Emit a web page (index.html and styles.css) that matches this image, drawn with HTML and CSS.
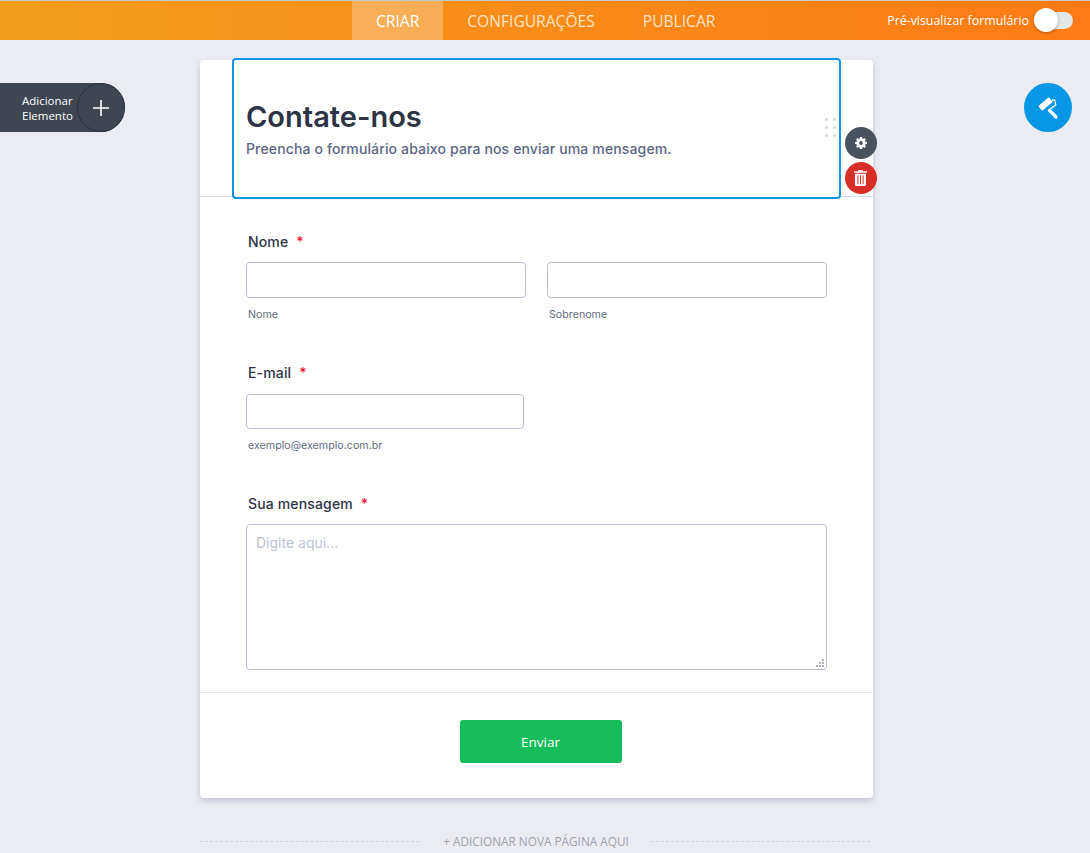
FILE: index.html
```html
<!DOCTYPE html>
<html lang="pt-BR">
<head>
    <meta charset="UTF-8">
    <title>Contate-nos</title>
    <link rel="stylesheet" href="styles.css">
</head>
<body>
    <header class="topbar">
        <nav class="tabs">
            <a class="tab active">CRIAR</a>
            <a class="tab">CONFIGURAÇÕES</a>
            <a class="tab">PUBLICAR</a>
        </nav>
        <div class="preview">
            <span>Pré-visualizar formulário</span>
            <span class="switch"><span class="knob"></span></span>
        </div>
    </header>

    <div class="add-element">
        <span class="add-text">Adicionar<br>Elemento</span>
        <span class="add-circle">
            <svg width="16" height="16" viewBox="0 0 16 16"><path d="M8 0v16M0 8h16" stroke="#fff" stroke-width="1.6"/></svg>
        </span>
    </div>

    <button class="paint-btn" type="button">
        <svg width="24" height="24" viewBox="0 0 24 24">
            <rect x="2.500" y="5" width="14" height="6" rx="1" transform="rotate(-40 9.500 8)" fill="#fff"/>
            <path d="M16 4.500l2.600-.6 1.200 4.800-6.600 5.300" fill="none" stroke="#fff" stroke-width="1.300"/>
            <path d="M13.500 14.500l6.500 6.500" fill="none" stroke="#fff" stroke-width="3.200" stroke-linecap="round"/>
        </svg>
    </button>

    <main class="card">
        <section class="card-head">
            <div class="head-selected">
                <h1>Contate-nos</h1>
                <p>Preencha o formulário abaixo para nos enviar uma mensagem.</p>
                <span class="drag-dots"><i></i><i></i><i></i><i></i><i></i><i></i></span>
            </div>
            <div class="head-tools">
                <button class="tool gear" type="button">
                    <svg width="12" height="12" viewBox="0 0 14 14">
                        <path fill="#fff" fill-rule="evenodd" d="M5.800 0h2.400l.3 1.800 1 .45L11.050 1.200l1.700 1.700-1.050 1.500.45 1L14 5.800v2.400l-1.850.4-.45 1 1.050 1.500-1.700 1.700-1.500-1.050-1 .45L8.200 14H5.800l-.3-1.800-1-.45-1.550 1.050-1.700-1.700 1.050-1.500-.45-1L0 8.200V5.800l1.850-.4.45-1L1.250 2.900l1.700-1.700 1.550 1.050 1-.45zM7 4.800a2.200 2.200 0 1 0 0 4.400 2.200 2.200 0 0 0 0-4.400z"/>
                    </svg>
                </button>
                <button class="tool trash" type="button">
                    <svg width="13" height="16" viewBox="0 0 13 16">
                        <path fill="#fff" fill-rule="evenodd" d="M4.500 0h4l.5 1.300h4v1.500H0V1.300h4zM1 3.800h11v10.700a1.500 1.500 0 0 1-1.500 1.500h-8A1.500 1.500 0 0 1 1 14.500zm2.400 1.500v9h1v-9zm2.600 0v9h1v-9zm2.600 0v9h1v-9z"/>
                    </svg>
                </button>
            </div>
        </section>

        <section class="fields">
            <div class="field field-name">
                <label>Nome <span class="req">*</span></label>
                <div class="name-row">
                    <div class="sub">
                        <input type="text">
                        <small>Nome</small>
                    </div>
                    <div class="sub">
                        <input type="text">
                        <small>Sobrenome</small>
                    </div>
                </div>
            </div>
            <div class="field field-email">
                <label>E-mail <span class="req">*</span></label>
                <input class="email" type="text">
                <small>exemplo@exemplo.com.br</small>
            </div>
            <div class="field field-msg">
                <label>Sua mensagem <span class="req">*</span></label>
                <div class="msg-box">
                    <textarea placeholder="Digite aqui..."></textarea>
                    <svg class="grip" width="8" height="8" viewBox="0 0 8 8">
                        <path fill="#b4b4b4" d="M6 0h2v2H6zM3 3h2v2H3zM6 3h2v2H6zM0 6h2v2H0zM3 6h2v2H3zM6 6h2v2H6z"/>
                    </svg>
                </div>
            </div>
        </section>

        <section class="card-foot">
            <button class="send" type="button">Enviar</button>
        </section>
    </main>

    <div class="add-page">
        <span class="dash"></span>
        <span class="add-page-text">+ ADICIONAR NOVA PÁGINA AQUI</span>
        <span class="dash"></span>
    </div>
</body>
</html>
```

FILE: styles.css
```css
* {
    box-sizing: border-box;
}

html, body {
    height: 853px;
    overflow: hidden;
}

body {
    margin: 0;
    background: #ebecf2;
    font-family: Inter, "Liberation Sans", sans-serif;
    color: #2c3345;
    position: relative;
}

.topbar {
    height: 40px;
    border-top: 1px solid #c8c8c8;
    background: linear-gradient(90deg, #f39c1c 0%, #ff7a14 100%);
    display: flex;
    justify-content: flex-end;
    align-items: center;
    font-family: "Open Sans", sans-serif;
    position: relative;
}

.tabs {
    position: absolute;
    left: 352px;
    top: 0;
    height: 39px;
    display: flex;
}

.tab {
    display: flex;
    align-items: center;
    padding: 0 24px;
    font-size: 15.600px;
    color: #ffe3c4;
}

.tab.active {
    background: rgba(255, 255, 255, 0.27);
    color: #fff;
}

.preview {
    display: flex;
    align-items: center;
    gap: 5px;
    padding-right: 17px;
    font-size: 12.400px;
    color: #fff;
}

.switch {
    display: block;
    width: 39px;
    height: 17px;
    border-radius: 9px;
    background: #e3e7e5;
    position: relative;
}

.knob {
    position: absolute;
    left: 0;
    top: -4px;
    width: 24px;
    height: 24px;
    border-radius: 50%;
    background: #fff;
    box-shadow: 0 1px 3px rgba(0, 0, 0, 0.3);
}

.add-element {
    position: absolute;
    left: 0;
    top: 83px;
    width: 125px;
    height: 49px;
    background: #3f4651;
    border-radius: 0 25px 25px 0;
    color: #fff;
}

.add-text {
    position: absolute;
    left: 22px;
    top: 10px;
    font-size: 11.500px;
    line-height: 15px;
    font-family: "Open Sans", sans-serif;
}

.add-circle {
    position: absolute;
    left: 77px;
    top: 0;
    width: 48px;
    height: 49px;
    border-radius: 50%;
    border: 1px solid #2c3340;
    display: flex;
    align-items: center;
    justify-content: center;
}

.paint-btn {
    position: absolute;
    left: 1024px;
    top: 83px;
    width: 48px;
    height: 49px;
    border: 0;
    border-radius: 50%;
    background: #0797e6;
    padding: 0;
    display: flex;
    align-items: center;
    justify-content: center;
}

.card {
    width: 673px;
    height: 738px;
    margin: 20px 0 0 200px;
    background: #fff;
    border-radius: 4px;
    box-shadow: 0 3px 6px rgba(86, 96, 128, 0.28);
    display: flex;
    flex-direction: column;
}

.card-head {
    height: 137px;
    border-bottom: 1px solid #d8dae5;
    position: relative;
}

.head-selected {
    position: absolute;
    left: 32px;
    top: -2px;
    width: 609px;
    height: 141px;
    border: 2px solid #1296e4;
    border-radius: 4px;
    background: #fff;
    padding: 39px 0 0 12px;
}

h1 {
    margin: 0;
    font-size: 29px;
    line-height: 35px;
    font-weight: 600;
    color: #2c3345;
}

.head-selected p {
    margin: 6px 0 0;
    font-size: 14px;
    line-height: 17px;
    font-weight: 500;
    letter-spacing: 0.14px;
    color: #5c6685;
}

.drag-dots {
    position: absolute;
    right: 3px;
    top: 58px;
    width: 11px;
    display: grid;
    grid-template-columns: 3px 3px;
    gap: 5px;
    justify-content: space-between;
}

.drag-dots i {
    display: block;
    width: 3px;
    height: 3px;
    background: #d3d7e3;
    border-radius: 50%;
}

.head-tools {
    position: absolute;
    left: 645px;
    top: 67px;
    display: flex;
    flex-direction: column;
    gap: 3px;
}

.tool {
    width: 32px;
    height: 32px;
    border: 0;
    border-radius: 50%;
    padding: 0;
    display: flex;
    align-items: center;
    justify-content: center;
}

.tool.gear {
    background: #4a525e;
}

.tool.trash {
    background: #d92d27;
}

.tool.trash svg {
    margin-right: 1px;
}

.fields {
    flex: 1;
    padding: 0 46px;
    border-bottom: 1px solid #e4e6f0;
}

.field {
    display: flex;
    flex-direction: column;
}

.field label {
    font-size: 14px;
    line-height: 17px;
    font-weight: 500;
    letter-spacing: 0.15px;
    margin: 0 0 12px 2px;
    color: #2c3345;
}

.req {
    color: #f2183a;
    margin-left: 4px;
}

.field small {
    display: block;
    font-size: 10.700px;
    line-height: 14px;
    margin: 10px 0 0 2px;
    color: #636b80;
}

input, textarea {
    display: block;
    background: #fff;
    border: 1px solid #b8bfd2;
    border-radius: 4px;
    font-family: inherit;
}

.field-name {
    padding-top: 36px;
}

.name-row {
    display: flex;
    gap: 21px;
}

.sub {
    flex: 1;
}

.sub input {
    width: 100%;
    height: 36px;
}

.field-email {
    padding-top: 42px;
}

.field-email label {
    margin-bottom: 13px;
}

.email {
    width: 278px;
    height: 35px;
}

.field-msg {
    padding-top: 42px;
}

.msg-box {
    position: relative;
}

textarea {
    width: 581px;
    height: 146px;
    padding: 9px;
    font-size: 14px;
    resize: none;
}

textarea::placeholder {
    color: #bcc3d6;
}

.grip {
    position: absolute;
    right: 3px;
    bottom: 3px;
}

.card-foot {
    height: 105px;
    padding: 27px 0 0 8px;
    display: flex;
    justify-content: center;
    align-items: flex-start;
}

.send {
    width: 162px;
    height: 43px;
    border: 0;
    border-radius: 3px;
    background: #18bd5b;
    color: #fff;
    font-family: "Open Sans", sans-serif;
    font-size: 13.500px;
}

.add-page {
    margin: 35px 0 0 200px;
    width: 670px;
    display: flex;
    align-items: center;
    gap: 22px;
    font-family: "Open Sans", sans-serif;
    font-size: 11.800px;
    line-height: 16px;
    color: #a0a1ac;
}

.add-page-text {
    margin-left: 2px;
}

.dash {
    flex: 1;
    border-top: 1px dashed #d0d2dc;
}
```
